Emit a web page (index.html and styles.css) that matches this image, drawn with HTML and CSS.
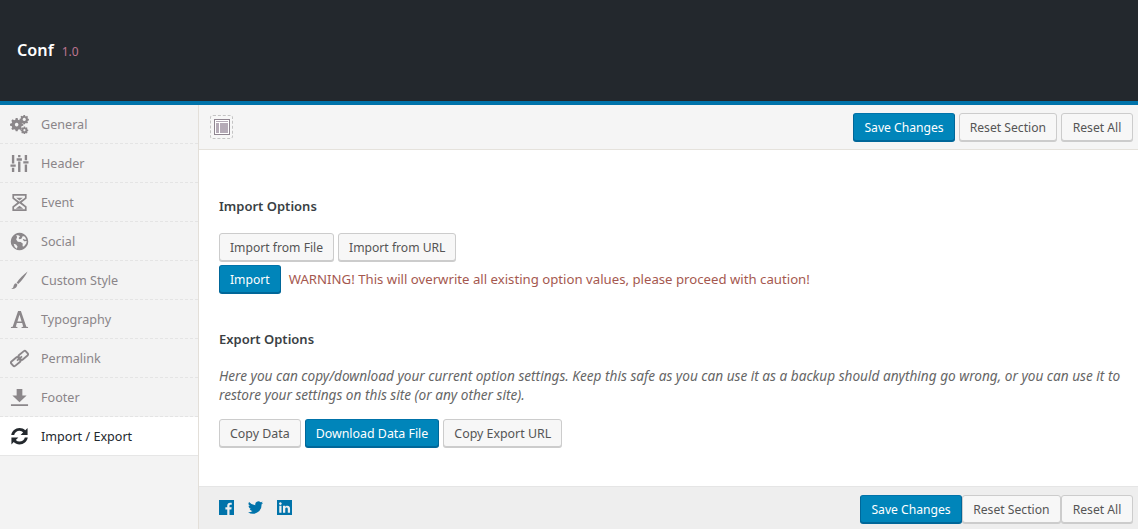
FILE: index.html
```html
<!DOCTYPE html>
<html lang="en">
<head>
<meta charset="utf-8">
<title>Conf Options</title>
<link rel="stylesheet" href="styles.css">
</head>
<body>
<header class="masthead">
  <span class="brand">Conf</span>
  <span class="version">1.0</span>
</header>
<div class="shell">
  <nav class="sidebar">
    <a class="nav-item">
      <svg class="nav-icon" viewBox="0 0 20 20"><path fill-rule="evenodd" d="M6.500 5.500h2l.4 1.700 1.300.6 1.500-.9 1.400 1.400-.9 1.500.6 1.300 1.700.4v2l-1.700.4-.6 1.300.9 1.500-1.400 1.400-1.500-.9-1.300.6-.4 1.700h-2l-.4-1.700-1.300-.6-1.500.9-1.400-1.400.9-1.500-.6-1.300-1.700-.4v-2l1.700-.4.600-1.300-.9-1.500 1.400-1.400 1.500.9 1.300-.6zM7.500 10.500a1.900 1.900 0 1 0 .01 0z" transform="translate(-.5 -2.300)"/><path fill-rule="evenodd" d="M15 .5h1.600l.3 1.200.8.300 1-.6 1.100 1.100-.6 1 .3.8 1.200.3v1.600l-1.200.3-.3.8.6 1-1.100 1.100-1-.6-.8.3-.3 1.200H15l-.3-1.200-.8-.3-1 .6-1.100-1.100.6-1-.3-.8-1.200-.3V4.500l1.200-.3.3-.8-.6-1 1.100-1.100 1 .6.8-.3zM15.800 3.500a1.700 1.700 0 1 0 .01 0z" transform="translate(-.8 -.5)"/><path fill-rule="evenodd" d="M15.300 12.200h1.400l.2.900.7.300.8-.5.9.9-.5.8.3.7.900.2v1.400l-.9.2-.3.7.5.8-.9.9-.8-.5-.7.3-.2.900h-1.400l-.2-.9-.7-.3-.8.5-.9-.9.5-.8-.3-.7-.9-.2v-1.400l.9-.2.3-.7-.5-.8.9-.9.8.5.7-.3zM16 14.800a1.100 1.100 0 1 0 .01 0z" transform="translate(-.8 0)"/></svg>
      <span>General</span>
    </a>
    <a class="nav-item">
      <svg class="nav-icon" viewBox="0 0 20 20"><path d="M2 1h2.500v9H2zM2 14.500h2.500V19H2zM.5 11h5.500v2.500H.5zM8.500 1H11v2.500H8.500zM8.500 8H11v11H8.500zM7 4.500h5.500V7H7zM15.500 1H18v5.500h-2.500zM15.500 11H18v8h-2.500zM14 7.500h5.500V10H14z"/></svg>
      <span>Header</span>
    </a>
    <a class="nav-item">
      <svg class="nav-icon" viewBox="0 0 20 20"><path fill-rule="evenodd" d="M2.500 1h15v4.800L12.300 10l5.200 4.200V19h-15v-4.800L7.700 10 2.500 5.800zM4.300 2.800v2.100L10 9.300l5.700-4.400V2.800zM10 10.700l-5.700 4.400v2.100h11.400v-2.100z"/><path d="M6.500 5h7L10 7.800zM6 16.700l4-3.200 4 3.200z"/></svg>
      <span>Event</span>
    </a>
    <a class="nav-item">
      <svg class="nav-icon" viewBox="0 0 20 20"><path fill-rule="evenodd" d="M10 .8a9.200 9.200 0 1 0 .01 0zM6.500 3.200l3 .4 1 1.200-1.500 1.400 1 1.400 2-.4 1.500-3 2.200.8 1.500 2.800-1.500.4-1.300-.9-1 .6 1.500 1.800 2.700-.2-.5 2.700-2.500 3-1.400-.3.2-2.800-2.200-1.600-3-.3-1.700-2.400 1-2.600zM3.800 12.300l2.600.8 1.500 2.200-.7 2.400-2.200-1.900z"/></svg>
      <span>Social</span>
    </a>
    <a class="nav-item">
      <svg class="nav-icon" viewBox="0 0 20 20"><path d="M18.500.5C14.500 3.500 9.500 8 7 12.300l1.700 1.500C12.500 10 16.500 5 18.500.5zM6.300 12.900C4.200 13.500 4 15.300 3.500 16.800c-.4 1-1.300 1.700-2.500 2.200 3 .3 6-.5 6.800-4.700z"/></svg>
      <span>Custom Style</span>
    </a>
    <a class="nav-item">
      <svg class="nav-icon" viewBox="0 0 20 20"><path fill-rule="evenodd" d="M8.500 1h3L17.200 17.500l1.800.5v1h-6.800v-1l1.700-.5-1.100-3.700H7.200L6.100 17.500l1.700.5v1H1v-1l1.800-.5zM10 5L7.800 12h4.400z"/></svg>
      <span>Typography</span>
    </a>
    <a class="nav-item">
      <svg class="nav-icon nav-icon-line" viewBox="0 0 20 20"><g transform="rotate(-40 10 10)"><rect x="0" y="7" width="9.500" height="6" rx="1.500"/><rect x="10.500" y="7" width="9.500" height="6" rx="1.500"/><path d="M6.500 10h7"/></g></svg>
      <span>Permalink</span>
    </a>
    <a class="nav-item">
      <svg class="nav-icon" viewBox="0 0 20 20"><path d="M7 1h6v7h4.500L10 15 2.500 8H7zM1 17h18v2H1z"/></svg>
      <span>Footer</span>
    </a>
    <a class="nav-item nav-item-active">
      <svg class="nav-icon" viewBox="0 0 20 20"><path d="M10 1c2.400 0 4.500.9 6.100 2.400L18.500 1v7.300h-7.300l2.700-2.700A5.700 5.700 0 0 0 10 4c-2.700 0-5 1.800-5.600 4.300H1.300C2 4.100 5.600 1 10 1zM1.500 11h7.300l-2.700 2.700A5.700 5.700 0 0 0 10 15.300c2.700 0 5-1.800 5.600-4.300h3.100c-.7 4.200-4.300 7.300-8.700 7.300-2.400 0-4.500-.9-6.100-2.400l-2.400 2.400z"/></svg>
      <span>Import / Export</span>
    </a>
  </nav>
  <main class="panel">
    <div class="toolbar">
      <button class="expand-toggle" type="button" aria-label="Toggle layout">
        <svg viewBox="0 0 16 16" width="16" height="16"><rect x=".5" y=".5" width="15" height="15" fill="#fff" stroke="#8f8590"/><rect x="2" y="2" width="12" height="1" fill="#b5abb7"/><rect x="2" y="4" width="3" height="10" fill="#b5abb7"/><rect x="6" y="4" width="8" height="10" fill="#b5abb7"/></svg>
      </button>
      <div class="actions">
        <button class="btn btn-primary" type="button">Save Changes</button>
        <button class="btn" type="button">Reset Section</button>
        <button class="btn btn-reset-all" type="button">Reset All</button>
      </div>
    </div>
    <div class="content">
      <section class="import-section">
        <h3 class="section-title">Import Options</h3>
        <div class="btn-row">
          <button class="btn" type="button">Import from File</button>
          <button class="btn" type="button">Import from URL</button>
        </div>
        <div class="btn-row warning-row">
          <button class="btn btn-primary" type="button">Import</button>
          <span class="warning">WARNING! This will overwrite all existing option values, please proceed with caution!</span>
        </div>
      </section>
      <section class="export-section">
        <h3 class="section-title">Export Options</h3>
        <p class="description">Here you can copy/download your current option settings. Keep this safe as you can use it as a backup should anything go wrong, or you can use it to restore your settings on this site (or any other site).</p>
        <div class="btn-row">
          <button class="btn" type="button">Copy Data</button>
          <button class="btn btn-primary" type="button">Download Data File</button>
          <button class="btn" type="button">Copy Export URL</button>
        </div>
      </section>
    </div>
    <footer class="panel-footer">
      <div class="social">
        <svg viewBox="0 0 16 16" width="15" height="15"><path fill="#0073aa" d="M0 0h16v16h-4.800v-6h2l.3-2.400h-2.300V6.100c0-.7.200-1.100 1.200-1.100h1.200V2.900c-.2 0-.9-.1-1.800-.1-1.800 0-3 1.100-3 3.100v1.700h-2V10h2v6H0z"/></svg>
        <svg viewBox="0 0 16 16" width="15" height="15"><path fill="#0073aa" d="M16 3c-.6.300-1.200.4-1.900.5.700-.4 1.200-1 1.400-1.800-.6.400-1.300.7-2.100.8A3.300 3.300 0 0 0 7.800 5.500 9.300 9.300 0 0 1 1.100 2.100a3.300 3.300 0 0 0 1 4.400c-.5 0-1-.2-1.500-.4 0 1.600 1.100 2.900 2.600 3.200-.5.100-1 .2-1.500.1.400 1.300 1.600 2.200 3.100 2.300A6.600 6.600 0 0 1 0 13.100 9.300 9.300 0 0 0 14.400 4.800c.6-.5 1.200-1.100 1.600-1.800z"/></svg>
        <svg viewBox="0 0 16 16" width="15" height="15"><path fill="#0073aa" fill-rule="evenodd" d="M0 0h16v16H0zM2.400 6.200v7.400h2.400V6.200zM3.600 2.500a1.400 1.400 0 1 0 .01 0zM6.400 6.200v7.400h2.400V9.800c0-1 .2-1.900 1.400-1.900s1.300 1.100 1.300 2v3.700h2.400V9.400c0-2-.5-3.400-2.900-3.400-1.100 0-1.900.6-2.200 1.200V6.200z"/></svg>
      </div>
      <div class="actions actions-tight">
        <button class="btn btn-primary" type="button">Save Changes</button>
        <button class="btn" type="button">Reset Section</button>
        <button class="btn btn-reset-all" type="button">Reset All</button>
      </div>
    </footer>
  </main>
</div>
</body>
</html>
```
FILE: styles.css
```css
* { box-sizing: border-box; }
html, body { margin: 0; padding: 0; height: 100%; overflow: hidden; }
body {
  font-family: "Noto Sans", "Open Sans", sans-serif;
  font-size: 12.150px;
  color: #444;
  background: #fff;
  display: flex;
  flex-direction: column;
}
.masthead {
  height: 105px;
  flex: none;
  background: #23282d;
  border-bottom: 4px solid #0073aa;
  padding: 38px 0 0 17px;
  display: flex;
  align-items: baseline;
  gap: 8px;
}
.brand { color: #fff; font-size: 16.200px; font-weight: 600; line-height: 24px; }
.version { color: #bd7590; font-size: 12px; }
.shell { flex: 1; display: flex; min-height: 0; }
.sidebar {
  width: 199px;
  flex: none;
  background: #f3f3f3;
  border-right: 1px solid #e3dfd9;
  display: flex;
  flex-direction: column;
}
.nav-item {
  height: 39px;
  flex: none;
  display: flex;
  align-items: center;
  gap: 12px;
  padding-left: 10px;
  border-bottom: 1px dashed #e4e4e4;
  color: #8a8589;
  font-size: 12.600px;
}
.nav-icon { width: 19px; height: 19px; fill: #8b878a; flex: none; }
.nav-icon-line { fill: none; stroke: #8b878a; stroke-width: 2; }
.nav-item-active {
  background: #fff;
  color: #23282d;
  border-bottom: 1px solid #e6e6e6;
}
.nav-item-active .nav-icon { fill: #23282d; }
.panel { flex: 1; min-width: 0; display: flex; flex-direction: column; }
.toolbar {
  height: 45px;
  flex: none;
  background: #f5f5f5;
  border-bottom: 1px solid #e5e2dc;
  padding: 8px 5px 0 11px;
  display: flex;
  justify-content: space-between;
  align-items: flex-start;
}
.expand-toggle {
  width: 23px;
  height: 24px;
  margin-top: 2px;
  padding: 0;
  border: 1px dashed #c4c4c4;
  border-radius: 3px;
  background: #f7f7f7;
  display: flex;
  align-items: center;
  justify-content: center;
}
.actions { display: flex; gap: 4px; }
.actions-tight { gap: .5px; }
.btn {
  height: 28px;
  padding: 1px 10px 0;
  font: inherit;
  line-height: 25px;
  color: #555;
  background: #f7f7f7;
  border: 1px solid #ccc;
  border-radius: 3px;
  box-shadow: 0 1px 0 #ccc;
  white-space: nowrap;
}
.btn-reset-all { min-width: 72px; }
.btn-primary {
  background: #0085ba;
  border-color: #0073aa #006799 #006799;
  box-shadow: 0 1px 0 #006799;
  color: #fff;
}
.content { flex: 1; min-height: 0; padding: 47px 12px 0 20px; }
.section-title { margin: 0; font-size: 13px; line-height: 18px; font-weight: 600; color: #3a3f44; }
.import-section .section-title { margin-bottom: 18px; }
.btn-row { display: flex; gap: 4px; align-items: center; }
.warning-row { margin-top: 4px; gap: 8px; }
.warning { color: #a5584f; font-size: 13.200px; }
.export-section { margin-top: 37px; }
.export-section .btn { font-size: 12.400px; }
.description { margin: 18px 0 15px; font-size: 13.630px; font-style: italic; line-height: 19px; color: #666; }
.panel-footer {
  height: 43px;
  flex: none;
  background: #eee;
  border-top: 1px solid #e5e5e5;
  padding: 8px 5px 0 20px;
  display: flex;
  justify-content: space-between;
  align-items: flex-start;
}
.social { display: flex; gap: 14px; padding-top: 5px; }
```
